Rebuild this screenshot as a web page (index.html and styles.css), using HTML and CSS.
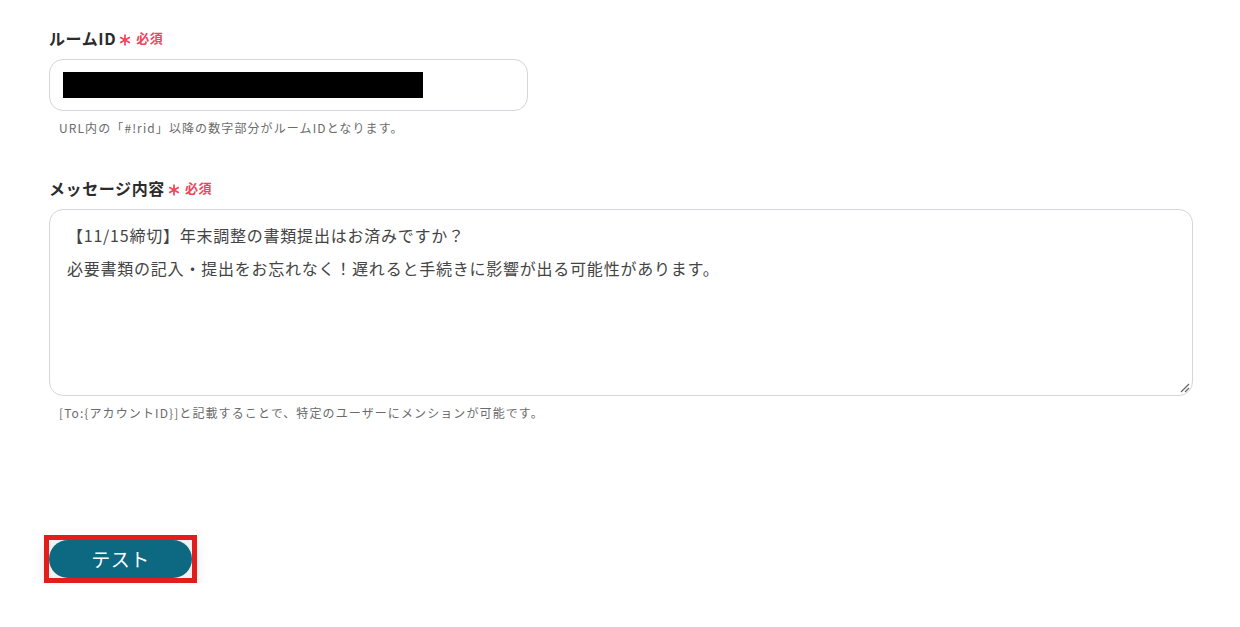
FILE: index.html
```html
<!DOCTYPE html>
<html lang="ja">
<head>
<meta charset="utf-8">
<link rel="stylesheet" href="styles.css">
</head>
<body>
<main class="form">
  <section class="field">
    <div class="label">ルームID<span class="req"><svg class="star" width="12" height="12" viewBox="0 0 12 12"><path d="M6 0.5 V11.5 M1.2 3.2 L10.8 8.8 M1.2 8.8 L10.8 3.2" stroke="#f0445a" stroke-width="1.7" fill="none"/></svg>必須</span></div>
    <div class="input">
      <div class="redact"></div>
    </div>
    <p class="help">URL内の「#!rid」以降の数字部分がルームIDとなります。</p>
  </section>
  <section class="field field-msg">
    <div class="label">メッセージ内容<span class="req"><svg class="star" width="12" height="12" viewBox="0 0 12 12"><path d="M6 0.5 V11.5 M1.2 3.2 L10.8 8.8 M1.2 8.8 L10.8 3.2" stroke="#f0445a" stroke-width="1.7" fill="none"/></svg>必須</span></div>
    <div class="textarea">
      <p>【11/15締切】年末調整の書類提出はお済みですか？</p>
      <p>必要書類の記入・提出をお忘れなく！遅れると手続きに影響が出る可能性があります。</p>
      <svg class="grip" width="12" height="12" viewBox="0 0 12 12"><path d="M11 3 L3 11 M11 7 L7 11" stroke="#666" stroke-width="1.2" fill="none"/></svg>
    </div>
    <p class="help">[To:{アカウントID}]と記載することで、特定のユーザーにメンションが可能です。</p>
  </section>
  <div class="actions">
    <div class="highlight">
      <button class="btn">テスト</button>
    </div>
  </div>
</main>
</body>
</html>
```
FILE: styles.css
```css
html, body {
  margin: 0;
  padding: 0;
  background: #fff;
}
body {
  font-family: "Noto Sans CJK JP", "Noto Sans", sans-serif;
  color: #333;
}
.form {
  padding: 25px 47px 0 49px;
}
.field {
  display: flex;
  flex-direction: column;
}
.label {
  font-size: 16px;
  font-weight: 700;
  color: #2b2b2b;
  line-height: 26px;
  letter-spacing: 0.6px;
  display: flex;
  align-items: center;
}
.req {
  color: #f0445a;
  font-size: 13px;
  font-weight: 700;
  margin-left: 3px;
  letter-spacing: 0.5px;
  display: flex;
  align-items: center;
}
.star {
  margin-right: 5px;
  position: relative;
  top: 2px;
}
.input {
  margin-top: 8px;
  width: 464px;
  height: 50px;
  border: 1px solid #d3d6db;
  border-radius: 14px;
  display: flex;
  align-items: center;
  padding-left: 13px;
  box-sizing: content-box;
}
.redact {
  width: 360px;
  height: 26px;
  background: #000;
}
.help {
  margin: 8px 0 0 10px;
  font-size: 12px;
  color: #6b6b6b;
  line-height: 18px;
  letter-spacing: 1.1px;
}
.field-msg {
  margin-top: 38px;
}
.textarea {
  margin-top: 8px;
  position: relative;
  height: 187px;
  border: 1px solid #d3d6db;
  border-radius: 14px;
  padding: 9px 17px;
  box-sizing: border-box;
  font-size: 16px;
  letter-spacing: 0.77px;
  color: #444;
}
.textarea p {
  margin: 0;
  line-height: 33px;
}
.grip {
  position: absolute;
  right: 2px;
  bottom: 2px;
}
.actions {
  margin-top: 113px;
  margin-left: -5px;
}
.highlight {
  display: inline-flex;
  border: 5px solid #e41c1c;
  background: #f2f2f2;
  box-shadow: 0 10px 16px rgba(0, 0, 0, 0.08);
}
.btn {
  width: 143px;
  height: 38px;
  border: none;
  border-radius: 19px;
  background: #0d6882;
  color: #fff;
  font-family: "Noto Sans CJK JP", "Noto Sans", sans-serif;
  font-size: 19px;
  letter-spacing: 0.5px;
  padding: 0;
  line-height: 38px;
}
```
